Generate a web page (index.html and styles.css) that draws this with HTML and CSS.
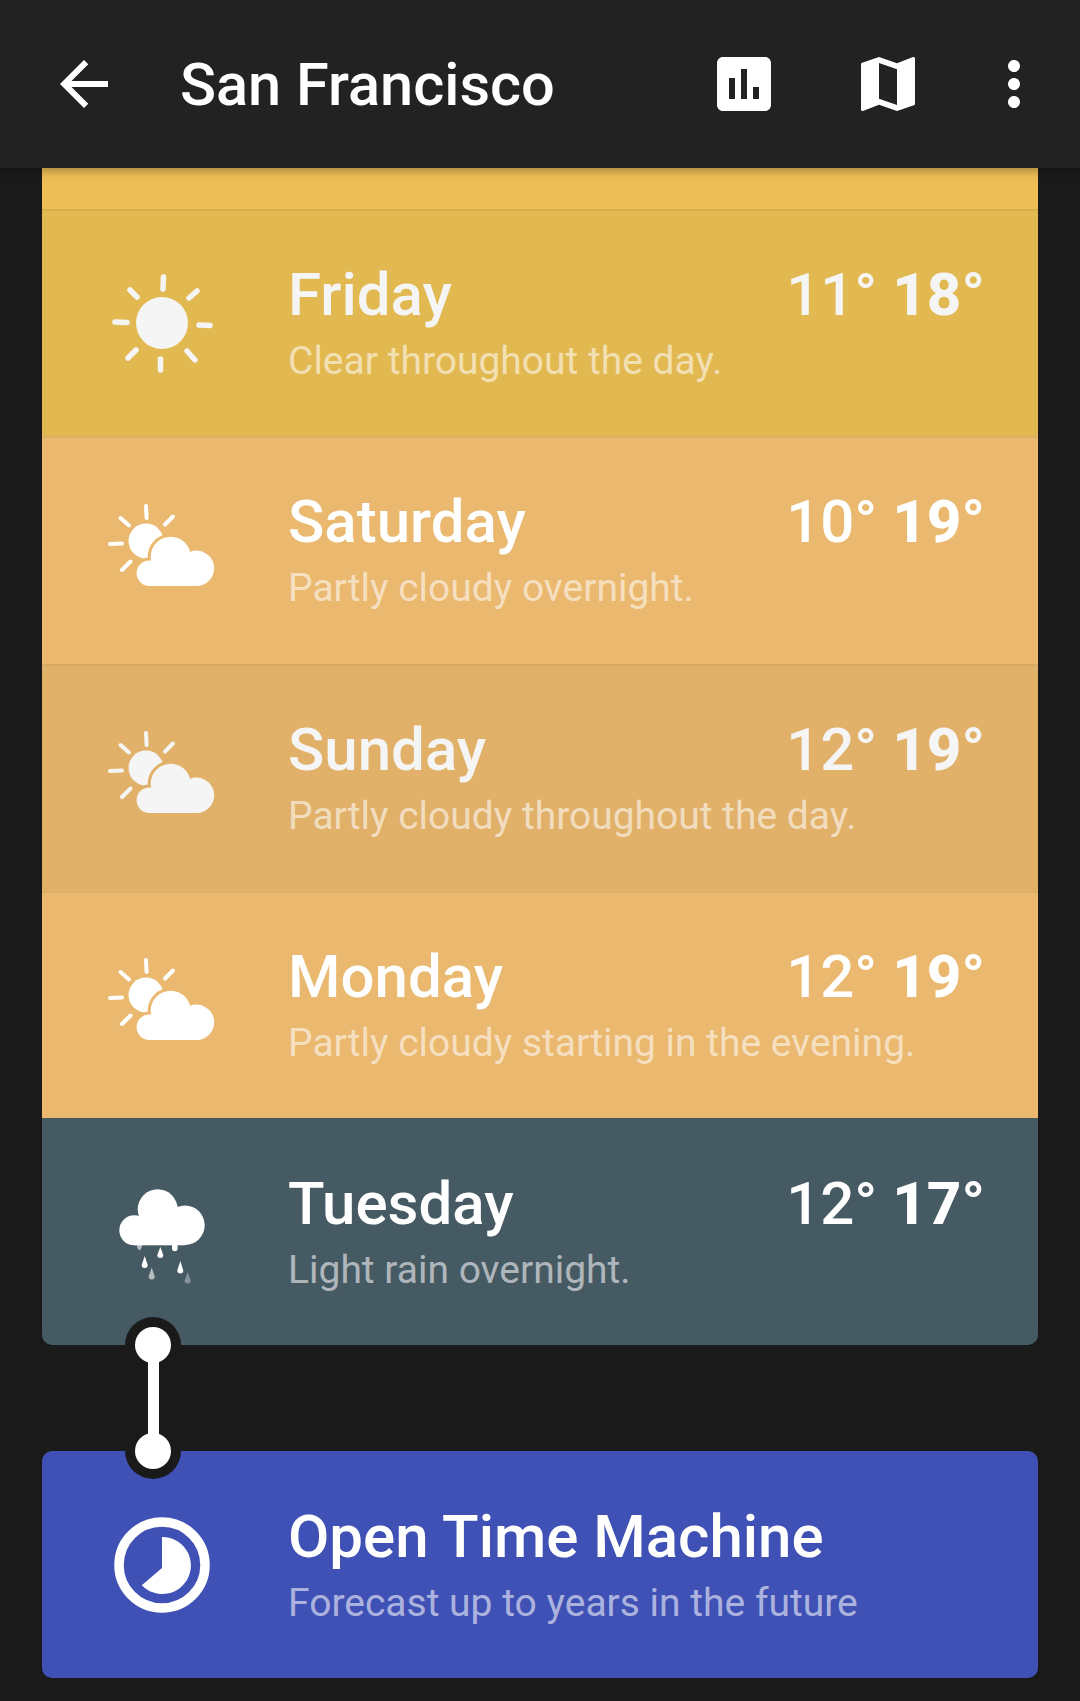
FILE: index.html
```html
<!DOCTYPE html>
<html lang="en">
<head>
    <meta charset="UTF-8">
    <title>San Francisco</title>
    <link rel="stylesheet" href="styles.css">
</head>
<body>
    <svg class="defs" width="0" height="0">
        <symbol id="icon-sun" viewBox="0 0 120 120">
            <circle cx="60" cy="60" r="26" fill="currentColor"/>
            <g stroke="currentColor" stroke-width="5.5" stroke-linecap="round">
                <line x1="61.5" y1="14" x2="61" y2="26"/>
                <line x1="58.5" y1="107" x2="58.5" y2="96"/>
                <line x1="13" y1="59" x2="25" y2="59.5"/>
                <line x1="97" y1="62" x2="108" y2="62.5"/>
                <line x1="28" y1="27" x2="35" y2="34"/>
                <line x1="95" y1="28" x2="87" y2="35"/>
                <line x1="26" y1="95" x2="34" y2="87"/>
                <line x1="93" y1="97" x2="85" y2="88"/>
            </g>
        </symbol>
        <symbol id="icon-partly" viewBox="0 0 120 120">
            <circle cx="44" cy="51" r="17.500" fill="currentColor"/>
            <g stroke="currentColor" stroke-width="4" stroke-linecap="round">
                <line x1="44" y1="16" x2="44.6" y2="28"/>
                <line x1="18.5" y1="28" x2="27" y2="35.5"/>
                <line x1="71" y1="26.500" x2="63" y2="34.500"/>
                <line x1="8" y1="54" x2="20" y2="53.500"/>
                <line x1="20" y1="80" x2="28.500" y2="71.500"/>
            </g>
            <g class="cloud-gap">
                <circle cx="47.300" cy="83.300" r="12.700"/>
                <circle cx="68.700" cy="66.700" r="20"/>
                <circle cx="94.500" cy="78.300" r="17.700"/>
                <rect x="47" y="72" width="48" height="24"/>
            </g>
            <g fill="currentColor">
                <circle cx="47.300" cy="83.300" r="12.700"/>
                <circle cx="68.700" cy="66.700" r="20"/>
                <circle cx="94.500" cy="78.300" r="17.700"/>
                <rect x="47" y="72" width="48" height="24"/>
            </g>
        </symbol>
        <symbol id="icon-rain" viewBox="0 0 120 120">
            <g fill="currentColor">
                <circle cx="55.700" cy="37.300" r="20"/>
                <circle cx="83" cy="53.300" r="19.700"/>
                <circle cx="32.300" cy="58.300" r="15"/>
                <rect x="32" y="50" width="51" height="23.300"/>
                <path d="M34.700 73h5.500l-1 3.500a1.800 1.800 0 0 1-3.500 0z" opacity=".6"/>
                <path d="M58.300 75l3 8a3 3 0 0 1-6 0z"/>
                <path d="M70 73h5.600v3.500a2.800 2.800 0 0 1-5.600 0z"/>
                <path d="M42.700 84l3 9a3 3 0 0 1-6 0z"/>
                <path d="M49.700 95.500l3 9a3 3 0 0 1-6 0z" opacity=".6"/>
                <path d="M78.300 89l3 9.500a3 3 0 0 1-6 0z"/>
                <path d="M85.700 100l3 8.500a3 3 0 0 1-6 0z" opacity=".35"/>
            </g>
        </symbol>
    </svg>

    <div class="toolbar">
        <svg class="bar-icon back" viewBox="0 0 24 24"><path d="M20 11H7.830l5.590-5.590L12 4l-8 8 8 8 1.410-1.410L7.830 13H20v-2z"/></svg>
        <div class="toolbar-title">San Francisco</div>
        <svg class="bar-icon" viewBox="0 0 24 24"><path d="M19 3H5c-1.100 0-2 .9-2 2v14c0 1.100.9 2 2 2h14c1.100 0 2-.9 2-2V5c0-1.100-.9-2-2-2zM9 17H7v-7h2v7zm4 0h-2V7h2v10zm4 0h-2v-4h2v4z"/></svg>
        <svg class="bar-icon map" viewBox="0 0 24 24"><path d="M20.500 3l-.16.03L15 5.100 9 3 3.360 4.900c-.21.07-.36.25-.36.48V20.500c0 .28.22.5.5.5l.16-.03L9 18.900l6 2.100 5.640-1.900c.21-.07.36-.25.36-.48V3.500c0-.28-.22-.5-.5-.5zM15 19l-6-2.110V5l6 2.110V19z"/></svg>
        <svg class="bar-icon more" viewBox="0 0 24 24"><path d="M12 8c1.100 0 2-.9 2-2s-.9-2-2-2-2 .9-2 2 .9 2 2 2zm0 2c-1.100 0-2 .9-2 2s.9 2 2 2 2-.9 2-2-.9-2-2-2zm0 6c-1.100 0-2 .9-2 2s.9 2 2 2 2-.9 2-2-.9-2-2-2z"/></svg>
    </div>

    <div class="content">
        <div class="forecast">
            <div class="day-stub"></div>

            <div class="day-row friday">
                <svg class="day-icon"><use href="#icon-sun"/></svg>
                <div class="day-text">
                    <div class="day-head"><span class="day-name">Friday</span><span class="temps">11° <b>18°</b></span></div>
                    <div class="day-summary">Clear throughout the day.</div>
                </div>
            </div>
            <div class="day-row saturday">
                <svg class="day-icon"><use href="#icon-partly"/></svg>
                <div class="day-text">
                    <div class="day-head"><span class="day-name">Saturday</span><span class="temps">10° <b>19°</b></span></div>
                    <div class="day-summary">Partly cloudy overnight.</div>
                </div>
            </div>
            <div class="day-row sunday">
                <svg class="day-icon"><use href="#icon-partly"/></svg>
                <div class="day-text">
                    <div class="day-head"><span class="day-name">Sunday</span><span class="temps">12° <b>19°</b></span></div>
                    <div class="day-summary">Partly cloudy throughout the day.</div>
                </div>
            </div>
            <div class="day-row monday">
                <svg class="day-icon"><use href="#icon-partly"/></svg>
                <div class="day-text">
                    <div class="day-head"><span class="day-name">Monday</span><span class="temps">12° <b>19°</b></span></div>
                    <div class="day-summary">Partly cloudy starting in the evening.</div>
                </div>
            </div>
            <div class="day-row tuesday">
                <svg class="day-icon"><use href="#icon-rain"/></svg>
                <div class="day-text">
                    <div class="day-head"><span class="day-name">Tuesday</span><span class="temps">12° <b>17°</b></span></div>
                    <div class="day-summary">Light rain overnight.</div>
                </div>
            </div>
        </div>

        <div class="time-machine">
            <svg class="day-icon" viewBox="0 0 120 120">
                <circle cx="60" cy="60" r="43" fill="none" stroke="#fff" stroke-width="9.500"/>
                <path d="M60 32A28.500 28.500 0 1 1 39.800 80.200L60 63z" fill="#fff"/>
            </svg>
            <div class="day-text">
                <div class="day-head"><span class="day-name">Open Time Machine</span></div>
                <div class="day-summary">Forecast up to years in the future</div>
            </div>
        </div>

        <!-- link between the last day and the time machine card -->
        <div class="connector">
            <span class="connector-dot"></span>
            <span class="connector-bar"></span>
            <span class="connector-dot"></span>
        </div>
    </div>
</body>
</html>
```

FILE: styles.css
```css
body {
    margin: 0;
    background: #1a1a1a;
    font-family: Roboto, 'Noto Sans', sans-serif;
    color: #fff;
    height: 1701px;
    overflow: hidden;
}
.defs {
    position: absolute;
}
/* Top bar */
.toolbar {
    position: relative;
    z-index: 2;
    height: 168px;
    background: #222;
    display: flex;
    align-items: center;
    padding: 0 30px 0 48px;
    box-shadow: 0 2px 10px rgba(0, 0, 0, 0.35);
}
.bar-icon {
    width: 72px;
    height: 72px;
    fill: #fff;
    flex: none;
}
.back {
    margin-right: 60px;
}
.map {
    margin-left: 72px;
}
.more {
    margin-left: 54px;
}
.toolbar-title {
    flex: 1;
    padding: 2px 0 0 0;
    font-size: 59.5px;
    font-weight: 500;
}
/* Day list */
.content {
    position: relative;
    padding: 0 42px;
}
.forecast {
    border-radius: 0 0 10px 10px;
    overflow: hidden;
}
.day-stub {
    height: 41px;
    background: #edbe55;
}
.day-row,
.time-machine {
    height: 227.25px;
    box-sizing: border-box;
    display: flex;
    align-items: center;
    padding: 0 53px 0 60px;
}
.day-row {
    --row-bg: #e2b851;
    background: var(--row-bg);
    box-shadow: inset 0 2px 0 rgba(0, 0, 0, 0.05);
}
.cloud-gap {
    fill: var(--row-bg);
    stroke: var(--row-bg);
    stroke-width: 6;
}
.saturday,
.monday {
    --row-bg: #eab86e;
}
.sunday {
    --row-bg: #e1b16a;
}
.tuesday {
    --row-bg: #465a64;
    box-shadow: none;
}
.day-icon {
    width: 120px;
    height: 120px;
    flex: none;
    margin-right: 66px;
    color: #f5f5f5;
}
.saturday .day-icon,
.monday .day-icon,
.tuesday .day-icon {
    color: #fff;
}
.day-text {
    flex: 1;
    min-width: 0;
    padding-top: 2px;
}
.day-head {
    display: flex;
    justify-content: space-between;
    align-items: baseline;
}
.day-name {
    font-size: 60px;
    font-weight: 500;
    line-height: 70px;
    color: #fff;
}
.sunday .day-name,
.friday .day-name,
.sunday .temps,
.friday .temps {
    color: #f5f5f5;
}
.temps {
    font-size: 60px;
    font-weight: 500;
    line-height: 70px;
    white-space: pre;
}
.temps b {
    font-weight: 800;
}
.day-summary {
    margin-top: 5px;
    font-size: 39px;
    line-height: 52px;
    color: rgba(255, 255, 255, 0.58);
    white-space: nowrap;
}
/* Time machine card */
.time-machine {
    margin-top: 106px;
    height: 227px;
    background: #3f51b5;
    border-radius: 10px;
}
/* Sits on top of both cards */
.connector {
    position: absolute;
    left: 153px;
    top: 1159px;
    width: 0;
    height: 0;
}
.connector-dot {
    position: absolute;
    left: -18px;
    width: 36px;
    height: 36px;
    border-radius: 50%;
    background: #fff;
    box-shadow: 0 0 0 10px #1a1a1a;
}
.connector-dot:first-child {
    top: 0;
}
.connector-dot:last-child {
    top: 106px;
}
.connector-bar {
    position: absolute;
    z-index: 1;
    left: -5.500px;
    top: 18px;
    width: 11px;
    height: 106px;
    background: #fff;
}
```
